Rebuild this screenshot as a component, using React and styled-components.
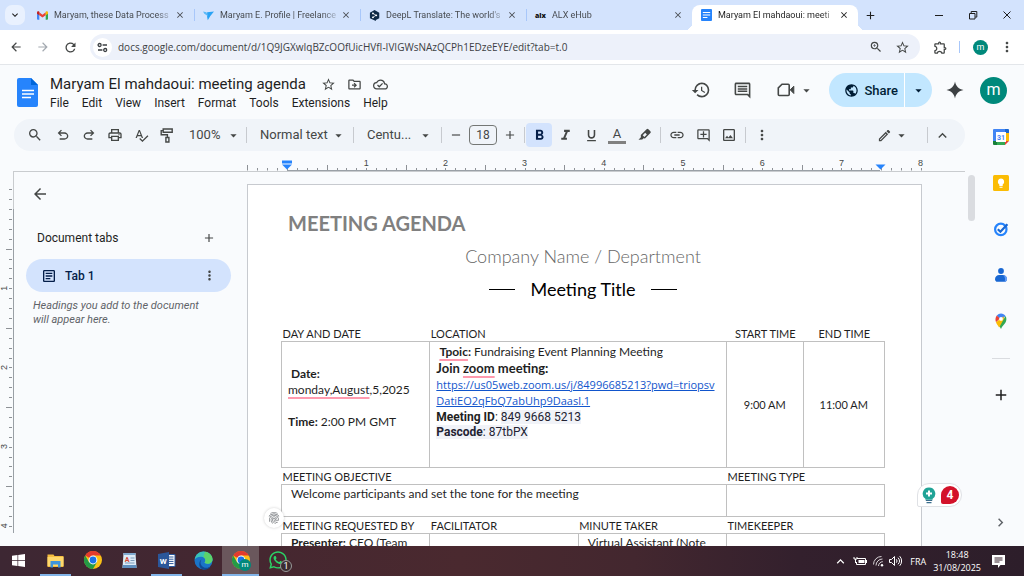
import React from "react"
import styled, { createGlobalStyle, css } from "styled-components"
import {
  MdAdd,
  MdArrowBack,
  MdArrowDropDown,
  MdArrowForward,
  MdChevronRight,
  MdClose,
  MdExpandLess,
  MdExpandMore,
  MdFingerprint,
  MdFormatBold,
  MdFormatItalic,
  MdFormatUnderlined,
  MdHistory,
  MdLink,
  MdMoreVert,
  MdOutlineAddComment,
  MdOutlineArticle,
  MdOutlineCloudDone,
  MdOutlineComment,
  MdOutlineDriveFileMove,
  MdOutlineEdit,
  MdOutlineExtension,
  MdOutlineImage,
  MdOutlinePrint,
  MdPublic,
  MdRefresh,
  MdRemove,
  MdSearch,
  MdSpellcheck,
  MdStarBorder,
  MdZoomIn,
} from "react-icons/md"
import { FaWhatsapp } from "react-icons/fa"

const browserTabs = [
  { icon: "gmail", title: "Maryam, these Data Process" },
  { icon: "freelancer", title: "Maryam E. Profile | Freelance" },
  { icon: "deepl", title: "DeepL Translate: The world's" },
  { icon: "alx", title: "ALX eHub" },
  { icon: "docs", title: "Maryam El mahdaoui: meeti", active: true },
]

const menus = ["File", "Edit", "View", "Insert", "Format", "Tools", "Extensions", "Help"]

const INCH = 79.2

const App = () => {
  return (
    <Screen>
      <GlobalStyle />
      <TabStrip>
        <TabSearch aria-label="Search tabs">
          <MdExpandMore size={12} />
        </TabSearch>
        {browserTabs.map((tab) => (
          <BrowserTab key={tab.icon} $active={tab.active}>
            <Favicon name={tab.icon} />
            <span className="title">{tab.title}</span>
            <button aria-label="Close tab">
              <MdClose size={10} />
            </button>
          </BrowserTab>
        ))}
        <NewTab aria-label="New tab">
          <MdAdd size={13} />
        </NewTab>
        <WindowButtons>
          <button aria-label="Minimize">
            <svg width="10" height="10" viewBox="0 0 10 10"><path d="M1 5.5h8" /></svg>
          </button>
          <button aria-label="Restore">
            <svg width="10" height="10" viewBox="0 0 10 10">
              <path d="M1.5 3.5h5.5v5.5h-5.5zM3.2 3.3v-1.8h5.6v5.6h-1.6" />
            </svg>
          </button>
          <button aria-label="Close">
            <svg width="10" height="10" viewBox="0 0 10 10"><path d="M1.5 1.5l7 7M8.5 1.5l-7 7" /></svg>
          </button>
        </WindowButtons>
      </TabStrip>

      <AddressRow>
        <IconButton aria-label="Back"><MdArrowBack size={14} /></IconButton>
        <IconButton aria-label="Forward" $muted><MdArrowForward size={14} /></IconButton>
        <IconButton aria-label="Reload"><MdRefresh size={15} /></IconButton>
        <Omnibox>
          <SiteInfo aria-label="Site information">
            <svg width="11" height="11" viewBox="0 0 11 11" fill="none" stroke="#3c4043" strokeWidth="1.3">
              <circle cx="2.6" cy="3" r="1.5" />
              <path d="M5.6 3H10M1 8h4.4" />
              <circle cx="8.2" cy="8" r="1.5" />
            </svg>
          </SiteInfo>
          <input
            aria-label="Address"
            defaultValue="docs.google.com/document/d/1Q9JGXwIqBZcOOfUicHVfI-IVIGWsNAzQCPh1EDzeEYE/edit?tab=t.0"
          />
          <IconButton aria-label="Zoom"><MdZoomIn size={14} /></IconButton>
          <IconButton aria-label="Bookmark"><MdStarBorder size={15} /></IconButton>
        </Omnibox>
        <ProfileTools>
          <IconButton aria-label="Extensions"><MdOutlineExtension size={15} /></IconButton>
          <i />
          <Avatar aria-label="Profile" $size={15}>m</Avatar>
          <IconButton aria-label="Chrome menu"><MdMoreVert size={16} /></IconButton>
        </ProfileTools>
      </AddressRow>

      <DocsHeader>
        <DocsLogo />
        <TitleBlock>
          <TitleLine>
            <h1>Maryam El mahdaoui: meeting agenda</h1>
            <IconButton aria-label="Star"><MdStarBorder size={15} /></IconButton>
            <IconButton aria-label="Move"><MdOutlineDriveFileMove size={15} /></IconButton>
            <IconButton aria-label="Saved to Drive"><MdOutlineCloudDone size={15} /></IconButton>
          </TitleLine>
          <MenuBar>
            {menus.map((menu) => (
              <button key={menu}>{menu}</button>
            ))}
          </MenuBar>
        </TitleBlock>
        <HeaderActions>
          <IconButton aria-label="Version history"><MdHistory size={20} /></IconButton>
          <IconButton aria-label="Comments"><MdOutlineComment size={19} /></IconButton>
          <MeetButton aria-label="Join a call">
            <MeetIcon />
            <MdArrowDropDown size={15} />
          </MeetButton>
          <ShareGroup>
            <button className="share">
              <MdPublic size={15} />
              Share
            </button>
            <button className="more" aria-label="Share options">
              <MdArrowDropDown size={15} />
            </button>
          </ShareGroup>
          <GeminiButton aria-label="Gemini">
            <svg width="18" height="18" viewBox="0 0 18 18" fill="#3c4043">
              <path d="M9 0.500c.9 4.700 3.800 7.600 8.500 8.500-4.700.9-7.600 3.800-8.500 8.500-.9-4.700-3.800-7.600-8.500-8.500 4.700-.9 7.600-3.800 8.500-8.500z" />
            </svg>
          </GeminiButton>
          <Avatar aria-label="Account" $size={27}>m</Avatar>
        </HeaderActions>
      </DocsHeader>

      <Workspace>
        <Editor>
          <EditToolbar />
          <HorizontalRuler />
          <Canvas>
            <VerticalRuler />
            <TabsPanel>
              <IconButton aria-label="Close tabs panel"><MdArrowBack size={18} /></IconButton>
              <PanelHeading>
                <h2>Document tabs</h2>
                <IconButton aria-label="Add tab"><MdAdd size={14} /></IconButton>
              </PanelHeading>
              <DocTab>
                <MdOutlineArticle size={16} />
                <span>Tab 1</span>
                <IconButton aria-label="Tab options"><MdMoreVert size={15} /></IconButton>
              </DocTab>
              <p>Headings you add to the document will appear here.</p>
            </TabsPanel>
            <DocumentPage />
            <ScrollTrack>
              <ScrollThumb />
            </ScrollTrack>
            <Grammarly aria-label="Writing suggestions">
              <svg width="14" height="17" viewBox="0 0 14 17">
                <path d="M7 0.500a6.200 6.200 0 0 1 3.600 11.300v1h-7.200v-1A6.200 6.200 0 0 1 7 .5z" fill="#1fa396" />
                <path d="M7 3.500v6M4 6.500h6" stroke="#fff" strokeWidth="2" />
                <path d="M3.800 13.500h6.400M4.500 15.700h5" stroke="#3a6d8c" strokeWidth="1.200" />
              </svg>
              <span>4</span>
            </Grammarly>
          </Canvas>
        </Editor>
        <SideRail />
      </Workspace>

      <Taskbar />
    </Screen>
  )
}

const EditToolbar = () => (
  <ToolbarPill>
    <IconButton aria-label="Search menus" $gap><MdSearch size={16} /></IconButton>
    <IconButton aria-label="Undo"><UndoIcon /></IconButton>
    <IconButton aria-label="Redo"><UndoIcon flip /></IconButton>
    <IconButton aria-label="Print"><MdOutlinePrint size={16} /></IconButton>
    <IconButton aria-label="Spelling check"><MdSpellcheck size={15} /></IconButton>
    <IconButton aria-label="Paint format">
      <svg width="15" height="15" viewBox="0 0 15 15" fill="none" stroke="#444746" strokeWidth="1.400">
        <path d="M3.200 1h9v3.200h-9zM3.200 2.600H1.200v4.200h6.200v2.500M5.900 9.500h3v4.500h-3z" />
      </svg>
    </IconButton>
    <Dropdown label="Zoom" value="100%" width={65} pad={9} end={4} />
    <Divider />
    <Dropdown label="Styles" value="Normal text" width={104} pad={12} end={6} />
    <Divider />
    <Dropdown label="Font" value="Centu..." width={85} pad={12} end={7} />
    <Divider />
    <IconButton aria-label="Decrease font size"><MdRemove size={14} /></IconButton>
    <FontSize aria-label="Font size" defaultValue="18" />
    <IconButton aria-label="Increase font size"><MdAdd size={14} /></IconButton>
    <Divider />
    <IconButton aria-label="Bold" $on><MdFormatBold size={17} /></IconButton>
    <IconButton aria-label="Italic"><MdFormatItalic size={17} /></IconButton>
    <IconButton aria-label="Underline"><MdFormatUnderlined size={15} /></IconButton>
    <TextColor aria-label="Text color">A</TextColor>
    <IconButton aria-label="Highlight color">
      <svg width="15" height="15" viewBox="0 0 15 15" fill="#444746">
        <path d="M9.600 1.300a1.300 1.300 0 0 1 1.800 0l2 2a1.300 1.300 0 0 1 0 1.800L8 10.500 6.500 10.300 5.300 11.500 1.500 11.800 3.900 9.300 3.800 7.100z" />
        <path d="M5.700 7.300l1.700 1.700 2.500-2.500-1.700-1.700z" fill="#f0f4f9" />
      </svg>
    </IconButton>
    <Divider $wide />
    <IconButton aria-label="Insert link"><MdLink size={16} /></IconButton>
    <IconButton aria-label="Add comment"><MdOutlineAddComment size={15} /></IconButton>
    <IconButton aria-label="Insert image"><MdOutlineImage size={16} /></IconButton>
    <Divider $wide />
    <IconButton aria-label="More"><MdMoreVert size={16} /></IconButton>
    <EditingMode aria-label="Editing mode">
      <MdOutlineEdit size={15} />
      <MdArrowDropDown size={15} />
    </EditingMode>
    <Divider />
    <IconButton aria-label="Hide the menus"><MdExpandLess size={17} /></IconButton>
  </ToolbarPill>
)

const Dropdown = ({ label, value, width, pad, end }) => (
  <SelectWrap $width={width} $pad={pad} $end={end}>
    <select aria-label={label}>
      <option>{value}</option>
    </select>
    <MdArrowDropDown size={15} />
  </SelectWrap>
)

// ticks every eighth of an inch, taller on the half
const HorizontalRuler = () => {
  const ticks = Array.from({ length: 69 }, (_, i) => i - 4)
  return (
    <RulerRow>
      <svg width="952" height="20" viewBox="13 0 952 20">
        {ticks.map((t) => {
          const x = Math.round(287 + (t * INCH) / 8) + 0.5
          const half = Math.abs(t % 8) === 4
          return x < 925 && (
            <path key={t} d={`M${x} ${half ? 14 : 17}V19.500`} stroke="#8d9196" />
          )
        })}
        {[1, 2, 3, 4, 5, 6, 7, 8].map((n) => (
          <text key={n} x={287 + n * INCH} y="15" textAnchor="middle">{n}</text>
        ))}
        <path d="M287 19.500H880" stroke="#9aa0a6" />
        <path d="M282 9.500h10v3h-10z" fill="#2684fc" />
        <path d="M282 13.500h10l-5 5z" fill="#2684fc" />
        <path d="M875.500 13.500h10l-5 5z" fill="#2684fc" />
      </svg>
    </RulerRow>
  )
}

const VerticalRuler = () => {
  const ticks = Array.from({ length: 36 }, (_, i) => i - 2)
  return (
    <VRuler>
      <svg width="14" height="374" viewBox="0 171 14 374">
        {ticks.map((t) => {
          const y = Math.round(208 + (t * INCH) / 8) + 0.5
          const half = Math.abs(t % 8) === 4
          return y < 532 && <path key={t} d={`M${half ? 6 : 9} ${y}H12`} stroke="#8d9196" />
        })}
        <path d="M13.500 171V208" stroke="#c9cccf" />
        <path d="M13.500 208V532" stroke="#9aa0a6" />
        {[1, 2, 3, 4].map((n) => (
          <text
            key={n}
            x="7"
            y={208 + n * INCH}
            transform={`rotate(-90 7 ${208 + n * INCH})`}
            textAnchor="middle"
          >
            {n}
          </text>
        ))}
      </svg>
    </VRuler>
  )
}

const DocumentPage = () => (
  <Page>
    <PageTitle>MEETING AGENDA</PageTitle>
    <Company>Company Name / Department</Company>
    <MeetingTitle>
      <i />
      Meeting Title
      <i />
    </MeetingTitle>
    <AgendaTable>
      <colgroup>
        <col style={{ width: "24.600%" }} />
        <col style={{ width: "24.600%" }} />
        <col style={{ width: "24.600%" }} />
        <col style={{ width: "12.700%" }} />
        <col />
      </colgroup>
      <tbody>
        <tr>
          <LabelCell>DAY AND DATE</LabelCell>
          <LabelCell colSpan={2}>LOCATION</LabelCell>
          <LabelCell $center>START TIME</LabelCell>
          <LabelCell $center>END TIME</LabelCell>
        </tr>
        <DetailRow>
          <DateCell>
            <b>&nbsp;Date:</b>
            <br />
            <Misspelt>monday,August</Misspelt>,5,2025
            <br />
            <br />
            <b>Time:</b> 2:00 PM GMT
          </DateCell>
          <LocationCell colSpan={2}>
            &nbsp;<Misspelt as="b">Tpoic</Misspelt><b>:</b> Fundraising Event Planning Meeting
            <JoinLine>
              Join <Misspelt>zoom</Misspelt> meeting:
            </JoinLine>
            <ZoomLink href="#join">
              https://us05web.zoom.us/j/84996685213?pwd=triopsv
              <br />
              DatiEO2qFbQ7abUhp9Daasl.1
            </ZoomLink>
            <MeetingInfo>
              <b>Meeting ID</b>: <mark>849 9668 5213</mark>
            </MeetingInfo>
            <MeetingInfo>
              <mark><b>Pascode</b>: 87tbPX</mark>
            </MeetingInfo>
          </LocationCell>
          <TimeCell>9:00 AM</TimeCell>
          <TimeCell>11:00 AM</TimeCell>
        </DetailRow>
        <tr>
          <LabelCell colSpan={3}>MEETING OBJECTIVE</LabelCell>
          <LabelCell colSpan={2}>MEETING TYPE</LabelCell>
        </tr>
        <ShortRow>
          <BodyCell colSpan={3} $indent>Welcome participants and set the tone for the meeting</BodyCell>
          <BodyCell colSpan={2} />
        </ShortRow>
        <tr>
          <LabelCell>MEETING REQUESTED BY</LabelCell>
          <LabelCell>FACILITATOR</LabelCell>
          <LabelCell>MINUTE TAKER</LabelCell>
          <LabelCell colSpan={2}>TIMEKEEPER</LabelCell>
        </tr>
        <ShortRow>
          <BodyCell $indent><b>Presenter:</b> CEO (Team</BodyCell>
          <BodyCell />
          <BodyCell $indent>Virtual Assistant (Note</BodyCell>
          <BodyCell colSpan={2} />
        </ShortRow>
      </tbody>
    </AgendaTable>
    <Fingerprint aria-label="Document details">
      <MdFingerprint size={14} />
    </Fingerprint>
  </Page>
)

const SideRail = () => (
  <Rail>
    <button aria-label="Calendar">
      <svg width="16" height="16" viewBox="0 0 16 16">
        <path d="M1 0h11v4H4v8H0V1a1 1 0 0 1 1-1z" fill="#4285f4" />
        <path d="M12 0h3a1 1 0 0 1 1 1v3h-4z" fill="#1967d2" />
        <path d="M12 4h4v8h-4z" fill="#fbbc04" />
        <path d="M4 12h8v4H4z" fill="#34a853" />
        <path d="M0 12h4v4H1a1 1 0 0 1-1-1z" fill="#188038" />
        <path d="M12 12h4l-4 4z" fill="#ea4335" />
        <path d="M3 3h10v10H3z" fill="#fff" />
        <text x="8" y="10.500" textAnchor="middle" fontSize="7" fontWeight="700" fill="#4285f4">31</text>
      </svg>
    </button>
    <button aria-label="Keep">
      <svg width="16" height="16" viewBox="0 0 16 16">
        <rect width="16" height="16" rx="1.500" fill="#fbbc04" />
        <path d="M8 3.500a3.200 3.200 0 0 1 1.700 5.900V11H6.300V9.400A3.200 3.200 0 0 1 8 3.500zM6.500 11.700h3v1h-3z" fill="#fff" />
      </svg>
    </button>
    <button aria-label="Tasks">
      <svg width="16" height="16" viewBox="0 0 16 16" fill="none">
        <circle cx="7.800" cy="8.400" r="5.700" stroke="#2684fc" strokeWidth="2.200" />
        <path d="M4.800 8.200l2.600 2.500 7-7.500" stroke="#1967d2" strokeWidth="2.200" />
      </svg>
    </button>
    <button aria-label="Contacts">
      <svg width="16" height="16" viewBox="0 0 16 16">
        <circle cx="8" cy="4" r="2.900" fill="#1967d2" />
        <path d="M2 12.200a4.200 4.200 0 0 1 4.200-4.200h3.600a4.200 4.200 0 0 1 4.200 4.200c0 1.500-1 2.600-2.400 2.600H4.400C3 14.800 2 13.700 2 12.200z" fill="#1967d2" />
        <path d="M10.500 8.100a4.200 4.200 0 0 1 3.500 4.100c0 1.500-1 2.600-2.400 2.600.9-2.200.4-4.700-1.100-6.700z" fill="#669df6" />
      </svg>
    </button>
    <button aria-label="Maps">
      <svg width="16" height="16" viewBox="0 0 16 16">
        <path d="M8 .5c1.900 0 3.500.9 4.500 2.400L8 8 3.800 2.500A5.500 5.500 0 0 1 8 .5z" fill="#4285f4" />
        <path d="M3.800 2.500L7 5.500 3 9.200C2.100 7 2.300 4.300 3.800 2.500z" fill="#ea4335" />
        <path d="M3 9.200l7.600-6 .5 5.500-5 5.800C5 12.500 3.500 10.700 3 9.200z" fill="#fbbc04" />
        <path d="M12.500 2.900c1.300 2 1.100 4.600 0 6.600C11.300 11.600 9 13 8 16c-.5-1-.9-1.900-1.300-2.600z" fill="#34a853" />
        <circle cx="8" cy="5.900" r="1.900" fill="#fff" />
      </svg>
    </button>
    <hr />
    <button aria-label="Get add-ons"><MdAdd size={18} /></button>
    <button className="hide" aria-label="Hide side panel"><MdChevronRight size={17} /></button>
  </Rail>
)

const Taskbar = () => (
  <TaskbarRow>
    <TaskButton aria-label="Start">
      <svg width="13" height="13" viewBox="0 0 13 13" fill="#fff">
        <path d="M0 1.800l5.500-.8v5H0zM6.200.9L13 0v6H6.200zM0 6.800h5.500v5.100L0 11.200zM6.200 6.800H13V13l-6.800-1z" />
      </svg>
    </TaskButton>
    <TaskButton aria-label="File Explorer" $open>
      <svg width="17" height="15" viewBox="0 0 17 15">
        <path d="M.5 1.500h6l1 1.500h9v11H.5z" fill="#f5bd3e" />
        <path d="M.5 4h16v9H.5z" fill="#ffd86b" />
        <path d="M3.500 8h10v6.500h-2.500v-3h-5v3H3.500z" fill="#3f95dd" />
      </svg>
    </TaskButton>
    <TaskButton aria-label="Google Chrome"><ChromeIcon size={18} /></TaskButton>
    <TaskButton aria-label="WordPad">
      <svg width="15" height="17" viewBox="0 0 15 17">
        <path d="M1.500 1h12l1 15H.5z" fill="#dcebf7" />
        <path d="M1.500 1h12v2h-12z" fill="#7fa9cf" />
        <path d="M8.500 6h4M8.500 8.500h4M3 11h9.500" stroke="#7d9cba" />
        <path d="M.7 13h13.700l.1 3H.5z" fill="#5f8fbe" />
        <text x="5" y="9.500" fontSize="7" fontWeight="700" textAnchor="middle" fill="#d6462e">A</text>
      </svg>
    </TaskButton>
    <TaskButton aria-label="Word" $open>
      <svg width="18" height="17" viewBox="0 0 18 17">
        <path d="M9 2.500h8v12H9z" fill="#fff" stroke="#2b579a" />
        <path d="M11 5h4.500M11 7.200h4.500M11 9.400h4.500M11 11.600h4.500" stroke="#2b579a" />
        <path d="M0 2l11-2v17L0 15z" fill="#2b579a" />
        <text x="5.300" y="11.500" fontSize="8" fontWeight="700" textAnchor="middle" fill="#fff">W</text>
      </svg>
    </TaskButton>
    <TaskButton aria-label="Edge">
      <svg width="19" height="19" viewBox="0 0 19 19">
        <circle cx="9.500" cy="9.500" r="9" fill="#1a74c8" />
        <path d="M.6 8.500C1.500 3.500 5 .5 9.500.5c5 0 9 3.500 9 7.700 0 2.800-2.200 4.600-5 4.600-1.600 0-2.900-.5-2.900-1.200 0-.4.800-.8.800-2.100C11.400 7.500 9.500 5.800 7 5.800c-3 0-5.200 1.200-6.400 2.700z" fill="#39c2b8" />
        <path d="M11 .7c4.300.7 7.500 3.800 7.500 7.500 0 2.800-2.200 4.600-5 4.600-1.600 0-2.900-.5-2.900-1.200 0-.4.800-.8.800-2.100 0-2-1-3-2-3.500z" fill="#5bd36a" />
        <path d="M7.500 8.500c-2.500 3.500 0 8 4.500 8.300 2 .1 3.600-.5 4.900-1.500-2 3-5.500 4-8.400 3C4.200 16.500 4.500 10.500 7.500 8.500z" fill="#0f4a94" />
      </svg>
    </TaskButton>
    <TaskButton aria-label="Google Chrome, profile m" $open $current>
      <ChromeIcon size={18} />
      <CornerBadge $profile>m</CornerBadge>
    </TaskButton>
    <TaskButton aria-label="WhatsApp">
      <FaWhatsapp size={20} color="#2bd366" />
      <CornerBadge>1</CornerBadge>
    </TaskButton>
    <Tray>
      <MdExpandLess size={15} />
      <svg width="14" height="10" viewBox="0 0 14 10" fill="none" stroke="#fff">
        <path d="M4 2.500h8.500v6H3.500V6M13.500 4v3" />
        <path d="M5.500 4h6v3h-6z" fill="#fff" stroke="none" />
        <path d="M1 1v2h3V1M2.500 3v4" />
      </svg>
      <svg width="12" height="12" viewBox="0 0 12 12" fill="none" stroke="#d8d2d6">
        <path d="M1.500 9.500A8 8 0 0 1 9.500 1.500M4 10.500a6.500 6.500 0 0 1 6.500-6.500M6.500 11a4.300 4.300 0 0 1 4.300-4.300" />
        <circle cx="10" cy="10.200" r="1.200" fill="#fff" stroke="none" />
      </svg>
      <svg width="13" height="12" viewBox="0 0 13 12" fill="none" stroke="#fff">
        <path d="M.5 4.500h2L5.500 1.500v9l-3-3h-2zM7.300 4.300a2.500 2.500 0 0 1 0 3.400M9 2.700a4.800 4.800 0 0 1 0 6.600M10.700 1.200a7 7 0 0 1 0 9.600" />
      </svg>
      <span>FRA</span>
      <Clock>
        <time>18:48</time>
        <time>31/08/2025</time>
      </Clock>
      <svg width="13" height="13" viewBox="0 0 13 13">
        <path d="M0 0h13v10H8.500L6 13v-3H0z" fill="#fff" />
        <path d="M2.500 3h8M2.500 5h8M2.500 7h5" stroke="#3a2431" />
      </svg>
    </Tray>
  </TaskbarRow>
)

const ChromeIcon = ({ size }) => (
  <svg width={size} height={size} viewBox="0 0 18 18">
    <circle cx="9" cy="9" r="9" fill="#fbc116" />
    <path d="M9 9L1.200 4.500A9 9 0 0 1 16.800 4.500H9z" fill="#e33b2e" />
    <path d="M9 9l-3.900 2.250L1.200 4.500A9 9 0 0 0 9 18l3.900-6.750z" fill="#249a46" />
    <circle cx="9" cy="9" r="4.400" fill="#fff" />
    <circle cx="9" cy="9" r="3.400" fill="#1a73e8" />
  </svg>
)

const UndoIcon = ({ flip }) => (
  <svg width="16" height="16" viewBox="0 0 24 24" fill="currentColor">
    <path
      transform={flip ? "matrix(-1 0 0 1 24 0)" : undefined}
      d="M7 19v-2h7.100q1.575 0 2.738-1T18 13.500 16.838 11 14.100 10H7.800l2.600 2.600L9 14 4 9l5-5 1.400 1.400L7.800 8h6.300q2.425 0 4.163 1.575T20 13.500t-1.737 3.925T14.100 19z"
    />
  </svg>
)

const MeetIcon = () => (
  <svg width="18" height="16" viewBox="0 0 18 16" fill="none" stroke="#444746" strokeWidth="1.600">
    <path d="M5 2.200h6.200a1 1 0 0 1 1 1v9.300a1 1 0 0 1-1 1H2.300a1 1 0 0 1-1-1V5.900z" />
    <path d="M13.200 7.800L16.800 4.200v7.300z" fill="#444746" strokeWidth="1" />
  </svg>
)

const DocsLogo = () => (
  <svg width="21" height="29" viewBox="0 0 21 29">
    <path d="M2 0h12l7 7v20a2 2 0 0 1-2 2H2a2 2 0 0 1-2-2V2a2 2 0 0 1 2-2z" fill="#2684fc" />
    <path d="M14 0l7 7h-7z" fill="#0066da" />
    <path d="M5 12.500h12M5 16h12M5 19.500h9" stroke="#fff" strokeWidth="1.600" />
  </svg>
)

const Favicon = ({ name }) => {
  if (name === "gmail") {
    return (
      <svg width="11" height="11" viewBox="0 0 12 12">
        <path d="M0 3h2.500v7.500H1a1 1 0 0 1-1-1z" fill="#4285f4" />
        <path d="M9.500 3H12v6.500a1 1 0 0 1-1 1H9.500z" fill="#34a853" />
        <path d="M2.500 2.500L6 5.200l3.500-2.700v3.200L6 8.300 2.500 5.700z" fill="#ea4335" />
        <path d="M0 3c0-1.500 1.400-2 2.500-1.200v4L0 4z" fill="#c5221f" />
        <path d="M12 3c0-1.500-1.400-2-2.500-1.200v4L12 4z" fill="#fbbc04" />
      </svg>
    )
  }
  if (name === "freelancer") {
    return (
      <svg width="11" height="11" viewBox="0 0 12 12">
        <path d="M4.500 2.500l7.500-1-4 5-2.800 4.800-.7-3.800z" fill="#29a3f5" />
        <path d="M0 1.500l3.800 1 1.700 4.300L1.500 4z" fill="#5bb9f7" />
      </svg>
    )
  }
  if (name === "deepl") {
    return (
      <svg width="11" height="11" viewBox="0 0 12 12">
        <path d="M6 0l5.200 3v6L7.500 11v1L1 9V3z" fill="#0f2b46" />
        <path d="M4.300 3.700l3.400 2.100-3.400 2.100" fill="none" stroke="#fff" strokeWidth=".8" />
        <circle cx="4.300" cy="3.700" r="1" fill="#fff" />
        <circle cx="7.900" cy="5.800" r="1" fill="#fff" />
        <circle cx="4.300" cy="8" r="1" fill="#fff" />
      </svg>
    )
  }
  if (name === "alx") {
    return <AlxMark>alx</AlxMark>
  }
  return (
    <svg width="11" height="12" viewBox="0 0 12 12" preserveAspectRatio="none">
      <rect width="12" height="12" rx="1" fill="#2684fc" />
      <path d="M2 3.500h8M2 6h8M2 8.500h5" stroke="#fff" strokeWidth="1.200" />
    </svg>
  )
}

const GlobalStyle = createGlobalStyle`
  * {
    box-sizing: border-box;
  }

  body {
    margin: 0;
    overflow: hidden;
    background: #f9fbfd;
    font-family: Roboto, sans-serif;
    color: #1f1f1f;
  }

  button, input, select {
    margin: 0;
    padding: 0;
    border: 0;
    background: none;
    color: inherit;
    font: inherit;
  }

  h1, h2, p {
    margin: 0;
  }

  svg {
    flex: none;
    display: block;
  }
`

const Screen = styled.div`
  display: flex;
  flex-direction: column;
  height: 100vh;
`

const IconButton = styled.button`
  display: flex;
  align-items: center;
  justify-content: center;
  flex: none;
  width: 26px;
  height: 24px;
  border-radius: 4px;
  color: ${(props) => (props.$muted ? "#a3a9b0" : "#444746")};
  margin-right: ${(props) => (props.$gap ? "2px" : "0")};

  ${(props) =>
    props.$on &&
    css`
      background: #d3e3fd;
      color: #041e49;
    `}
`

const GeminiButton = styled(IconButton)`
  margin: 0 -3px 0 -5px;
`

const Avatar = styled.button`
  display: flex;
  align-items: center;
  justify-content: center;
  flex: none;
  width: ${(props) => props.$size}px;
  height: ${(props) => props.$size}px;
  border-radius: 50%;
  background: #00897b;
  color: #fff;
  font-size: ${(props) => (props.$size > 20 ? 16 : 9)}px;
  line-height: 1;
`

const TabStrip = styled.div`
  display: flex;
  align-items: center;
  flex: none;
  height: 30px;
  padding-left: 5px;
  background: #d3e3fd;
`

const TabSearch = styled.button`
  display: flex;
  align-items: center;
  justify-content: center;
  width: 20px;
  height: 20px;
  margin-right: 3px;
  border-radius: 7px;
  background: #e9f1fe;
`

const BrowserTab = styled.div`
  position: relative;
  display: flex;
  align-items: center;
  align-self: flex-end;
  flex: 0 1 166px;
  min-width: 0;
  height: 25px;
  padding: 0 9px 5px;
  color: #474b50;
  font-size: 9px;

  & + & {
    background: linear-gradient(#a8c7fa, #a8c7fa) left 4px / 1px 12px no-repeat;
  }

  .title {
    flex: 1;
    margin-left: 6px;
    overflow: hidden;
    white-space: nowrap;
    line-height: 14px;
    mask-image: linear-gradient(to right, #000 85%, transparent);
  }

  ${(props) =>
    props.$active &&
    css`
      && {
        border-radius: 8px 8px 0 0;
        background: #fff;
        color: #1f1f1f;
      }

      /* flared feet of the open tab */
      &::before,
      &::after {
        content: "";
        position: absolute;
        bottom: 0;
        width: 7px;
        height: 7px;
      }

      &::before {
        right: 100%;
        background: radial-gradient(circle at 0 0, transparent 7px, #fff 7px);
      }

      &::after {
        left: 100%;
        background: radial-gradient(circle at 100% 0, transparent 7px, #fff 7px);
      }
    `}
`

const AlxMark = styled.span`
  width: 11px;
  font-family: "Open Sans", sans-serif;
  font-size: 7px;
  font-weight: 800;
  color: #111;
`

const NewTab = styled.button`
  display: flex;
  justify-content: center;
  width: 24px;
`

const WindowButtons = styled.div`
  display: flex;
  margin-left: auto;

  button {
    display: flex;
    justify-content: center;
    width: 34px;
  }

  svg {
    fill: none;
    stroke: #1f1f1f;
  }
`

const AddressRow = styled.div`
  display: flex;
  align-items: center;
  flex: none;
  height: 35px;
  padding: 0 4px 0 3px;
  background: #fff;
  border-bottom: 1px solid #e3e6ea;
  gap: 1px;
`

const Omnibox = styled.div`
  display: flex;
  align-items: center;
  flex: 1;
  height: 26px;
  margin-left: 6px;
  padding: 0 5px 0 3px;
  border-radius: 13px;
  background: #edf1fa;

  input {
    flex: 1;
    min-width: 0;
    margin-left: 6px;
    outline: none;
    color: #3c4043;
    font-family: "Open Sans", sans-serif;
    font-size: 10px;
  }
`

const SiteInfo = styled.button`
  display: flex;
  align-items: center;
  justify-content: center;
  width: 19px;
  height: 19px;
  border-radius: 50%;
  background: #fff;
`

const ProfileTools = styled.div`
  display: flex;
  align-items: center;
  gap: 6px;
  margin-left: 6px;

  i {
    width: 1px;
    height: 12px;
    margin-right: 7px;
    background: #a8c7fa;
  }
`

const DocsHeader = styled.header`
  display: flex;
  align-items: center;
  flex: none;
  height: 54px;
  padding: 0 17px;
`

const TitleBlock = styled.div`
  margin-left: 12px;
  padding-top: 2px;
`

const TitleLine = styled.div`
  display: flex;
  align-items: center;
  height: 20px;

  h1 {
    margin-right: 10px;
    font-size: 15px;
    font-weight: 400;
    line-height: 20px;
    white-space: nowrap;
  }
`

const MenuBar = styled.nav`
  display: flex;
  gap: 13px;
  font-size: 12px;
  line-height: 18px;
`

const HeaderActions = styled.div`
  display: flex;
  align-items: center;
  gap: 15px;
  margin: 0 0 4px auto;
`

const MeetButton = styled.button`
  display: flex;
  align-items: center;
  gap: 4px;
  margin-left: 7px;
  color: #444746;
`

const ShareGroup = styled.div`
  display: flex;
  height: 34px;
  border-radius: 17px;
  overflow: hidden;
  background: #c2e7ff;
  color: #001d35;

  .share {
    display: flex;
    align-items: center;
    gap: 5px;
    padding: 0 6px 0 15px;
    font-size: 13px;
    font-weight: 500;
  }

  .more {
    width: 28px;
    padding-left: 6px;
    border-left: 1px solid #fff;
  }
`

const Workspace = styled.div`
  display: flex;
  flex: 1;
  min-height: 0;
`

const Editor = styled.main`
  display: flex;
  flex-direction: column;
  flex: 1;
  min-width: 0;
`

const ToolbarPill = styled.div`
  display: flex;
  align-items: center;
  flex: none;
  height: 32px;
  margin: 0 12px 0 14px;
  padding: 0 10px 0 8px;
  border-radius: 16px;
  background: #f0f4f9;
  color: #444746;
`

const Divider = styled.span`
  flex: none;
  width: 1px;
  height: 16px;
  margin: 0 ${(props) => (props.$wide ? 3 : 1)}px;
  background: #c7cacf;
`

const SelectWrap = styled.span`
  display: grid;
  align-items: center;
  flex: none;
  width: ${(props) => props.$width}px;

  select,
  svg {
    grid-area: 1 / 1;
  }

  select {
    appearance: none;
    width: 100%;
    padding-left: ${(props) => props.$pad}px;
    font-size: 13px;
    line-height: 20px;
  }

  svg {
    justify-self: end;
    margin-right: ${(props) => props.$end}px;
    pointer-events: none;
  }
`

const FontSize = styled.input`
  width: 28px;
  height: 20px;
  border: 1px solid #747775;
  border-radius: 4px;
  font-size: 12px;
  text-align: center;
`

const TextColor = styled.button`
  width: 18px;
  height: 17px;
  margin: 0 5px 0 4px;
  border-bottom: 3px solid #808080;
  font-size: 13px;
  line-height: 13px;
`

const EditingMode = styled.button`
  display: flex;
  align-items: center;
  gap: 2px;
  margin: 0 17px 0 auto;
`

const RulerRow = styled.div`
  flex: none;
  height: 21px;
  margin: 0 12px 0 13px;
  overflow: hidden;
  border-bottom: 1px solid #c9cccf;

  text {
    fill: #444746;
    font-family: "Liberation Sans", sans-serif;
    font-size: 9px;
  }
`

const Canvas = styled.div`
  position: relative;
  display: flex;
  flex: 1;
  min-height: 0;
  overflow: hidden;
`

const VRuler = styled.div`
  flex: none;
  width: 14px;

  text {
    fill: #444746;
    font-family: "Liberation Sans", sans-serif;
    font-size: 9px;
  }
`

const TabsPanel = styled.aside`
  display: flex;
  flex-direction: column;
  flex: none;
  width: 233px;
  padding: 10px 16px 0 12px;

  > button {
    margin-left: 1px;
  }

  p {
    padding: 7px 20px 0 7px;
    color: #5f6368;
    font-size: 11px;
    font-style: italic;
    line-height: 14px;
  }
`

const PanelHeading = styled.div`
  display: flex;
  align-items: center;
  justify-content: space-between;
  margin-top: 20px;
  padding: 0 9px 0 11px;

  h2 {
    font-size: 12px;
    font-weight: 400;
  }
`

const DocTab = styled.div`
  display: flex;
  align-items: center;
  height: 33px;
  margin-top: 9px;
  padding: 0 9px 0 15px;
  border-radius: 17px;
  background: #d3e3fd;
  color: #041e49;
  font-size: 12px;
  font-weight: 500;

  span {
    flex: 1;
    margin-left: 8px;
  }
`

const Page = styled.article`
  position: relative;
  flex: 1;
  min-width: 0;
  height: 900px;
  margin-top: 12px;
  padding: 0 36px 0 33px;
  border: 1px solid #c7cacf;
  background: #fff;
  font-family: Lato, sans-serif;
`

const PageTitle = styled.h2`
  padding: 25px 0 0 7px;
  color: #808080;
  font-size: 20px;
  font-weight: 700;
  line-height: 26px;
`

const Company = styled.p`
  margin-top: 8px;
  color: #666;
  font-size: 18px;
  font-weight: 300;
  line-height: 24px;
  text-align: center;
`

const MeetingTitle = styled.p`
  display: flex;
  align-items: center;
  justify-content: center;
  gap: 15px;
  margin-top: 9px;
  color: #000;
  font-size: 18px;
  line-height: 24px;

  i {
    width: 26px;
    height: 1px;
    background: #000;
  }
`

const AgendaTable = styled.table`
  width: 100%;
  margin-top: 24px;
  border-collapse: collapse;
  table-layout: fixed;
  font-size: 12px;
  line-height: 16px;
`

const LabelCell = styled.td`
  padding: 1px 0 0 1px;
  font-size: 11px;
  line-height: 15px;
  text-align: ${(props) => (props.$center ? "center" : "left")};
  white-space: nowrap;
`

const BodyCell = styled.td`
  padding: 1px 6px 0;
  padding-left: ${(props) => (props.$indent ? 9 : 6)}px;
  border: 1px solid #c0c0c0;
  vertical-align: top;
  white-space: nowrap;
`

const DateCell = styled(BodyCell)`
  padding-top: 24px;
`

const LocationCell = styled(BodyCell)`
  padding-top: 2px;
`

const TimeCell = styled(BodyCell)`
  font-size: 11px;
  text-align: center;
  vertical-align: middle;
`

const DetailRow = styled.tr`
  height: 126px;
`

const ShortRow = styled.tr`
  height: 32px;
`

const Misspelt = styled.span`
  text-decoration: underline 2px #ff9aae;
  text-decoration-skip-ink: none;
  text-underline-offset: 3px;
`

const JoinLine = styled.div`
  font-size: 13px;
  font-weight: 700;
  line-height: 17px;
`

const ZoomLink = styled.a`
  display: block;
  padding-bottom: 1px;
  color: #1155cc;
  font-family: "Open Sans", sans-serif;
  font-size: 11px;
`

const MeetingInfo = styled.div`
  font-family: Roboto, sans-serif;
  line-height: 15px;

  mark {
    background: #f1f3f8;
    color: #232333;
  }
`

const Fingerprint = styled.button`
  position: absolute;
  left: 16px;
  top: 323px;
  display: flex;
  align-items: center;
  justify-content: center;
  width: 20px;
  height: 20px;
  border-radius: 50%;
  background: #fff;
  box-shadow: 0 0 3px rgba(0, 0, 0, 0.2);
  color: #5f6368;
`

const ScrollTrack = styled.div`
  flex: none;
  width: 55px;
  padding: 3px 2px 0 0;
`

const ScrollThumb = styled.div`
  width: 7px;
  height: 46px;
  margin-left: auto;
  border-radius: 4px;
  background: #dadce0;
`

const Grammarly = styled.button`
  position: absolute;
  right: 15px;
  bottom: 39px;
  display: flex;
  align-items: center;
  gap: 5px;
  height: 24px;
  padding: 0 2px 0 4px;
  border: 1px solid #dfe1e5;
  border-radius: 12px 12px 12px 2px;
  background: #fff;

  span {
    width: 18px;
    height: 18px;
    border-radius: 9px 9px 9px 2px;
    background: #d3122a;
    color: #fff;
    font-size: 12px;
    font-weight: 700;
    line-height: 18px;
    text-align: center;
  }
`

const Rail = styled.aside`
  display: flex;
  flex-direction: column;
  align-items: center;
  flex: none;
  width: 47px;
  padding-top: 9px;

  button {
    display: flex;
    align-items: center;
    justify-content: center;
    height: 18px;
    margin-bottom: 28px;
  }

  hr {
    width: 18px;
    height: 1px;
    margin: 0 0 27px;
    border: 0;
    background: #dadce0;
  }

  .hide {
    margin: auto 0 15px;
    color: #5f6368;
  }
`

const TaskbarRow = styled.footer`
  display: flex;
  flex: none;
  height: 30px;
  background: linear-gradient(to right, #3d2733, #452730 25%, #4a292f 45%, #43272f 62%, #33202d 78%, #2d1e2a);
  color: #fff;
`

const TaskButton = styled.button`
  position: relative;
  display: flex;
  align-items: center;
  justify-content: center;
  width: 37px;
  border-bottom: 2px solid transparent;

  ${(props) =>
    props.$open &&
    css`
      width: 31px;
      margin: 0 3px;
      border-color: #82b4e8;
    `}

  ${(props) =>
    props.$current &&
    css`
      width: 37px;
      margin: 0;
      background: #6a575c;
    `}
`

const CornerBadge = styled.span`
  position: absolute;
  right: ${(props) => (props.$profile ? 8 : 4)}px;
  bottom: ${(props) => (props.$profile ? 3 : 2)}px;
  width: 12px;
  height: 12px;
  border-radius: 50%;
  border: ${(props) => (props.$profile ? "0" : "1px solid #999")};
  background: ${(props) => (props.$profile ? "#00897b" : "#3a2a30")};
  font-size: ${(props) => (props.$profile ? 8 : 9)}px;
  line-height: ${(props) => (props.$profile ? 11 : 10)}px;
  text-align: center;
`

const Tray = styled.div`
  display: flex;
  align-items: center;
  gap: 5px;
  margin-left: auto;
  padding-right: 19px;
  font-family: "Open Sans", sans-serif;
  font-size: 9px;

  > span {
    margin-left: 3px;
  }
`

const Clock = styled.div`
  display: flex;
  flex-direction: column;
  align-items: center;
  margin: 0 6px 0 2px;
  line-height: 13px;
`

export default App
